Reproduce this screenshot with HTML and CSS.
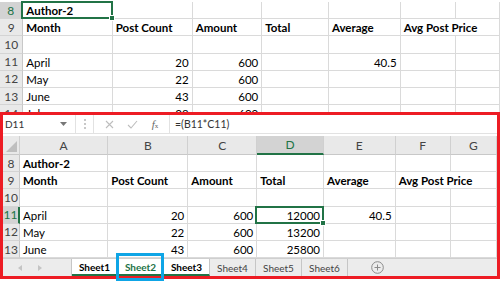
FILE: index.html
```html
<!DOCTYPE html>
<html lang="en">
<head>
    <meta charset="UTF-8">
    <meta name="viewport" content="width=device-width, initial-scale=1.0">
    <title>Author-2 - Excel</title>
    <link rel="stylesheet" href="styles.css">
</head>
<body>
    <!-- sheet before the formula was entered -->
    <section class="top-sheet">
        <div class="row">
            <div class="rh active">8</div>
            <div class="cell b sel">Author-2</div>
            <div class="cell"></div><div class="cell"></div><div class="cell"></div>
            <div class="cell"></div><div class="cell"></div><div class="cell"></div>
        </div>
        <div class="row">
            <div class="rh">9</div>
            <div class="cell b">Month</div>
            <div class="cell b">Post Count</div>
            <div class="cell b">Amount</div>
            <div class="cell b">Total</div>
            <div class="cell b">Average</div>
            <div class="cell b spill">Avg Post Price</div>
            <div class="cell"></div>
        </div>
        <div class="row">
            <div class="rh">10</div>
            <div class="cell"></div><div class="cell"></div><div class="cell"></div><div class="cell"></div>
            <div class="cell"></div><div class="cell"></div><div class="cell"></div>
        </div>
        <div class="row">
            <div class="rh">11</div>
            <div class="cell">April</div>
            <div class="cell num">20</div>
            <div class="cell num">600</div>
            <div class="cell"></div>
            <div class="cell num">40.5</div>
            <div class="cell"></div><div class="cell"></div>
        </div>
        <div class="row">
            <div class="rh">12</div>
            <div class="cell">May</div>
            <div class="cell num">22</div>
            <div class="cell num">600</div>
            <div class="cell"></div><div class="cell"></div><div class="cell"></div><div class="cell"></div>
        </div>
        <div class="row">
            <div class="rh">13</div>
            <div class="cell">June</div>
            <div class="cell num">43</div>
            <div class="cell num">600</div>
            <div class="cell"></div><div class="cell"></div><div class="cell"></div><div class="cell"></div>
        </div>
        <div class="row">
            <div class="rh">14</div>
            <div class="cell">July</div>
            <div class="cell num">38</div>
            <div class="cell num">600</div>
            <div class="cell"></div><div class="cell"></div><div class="cell"></div><div class="cell"></div>
        </div>
    </section>

    <!-- highlighted window with formula -->
    <section class="window">
        <div class="formula-bar">
            <div class="name-box">
                <span>D11</span>
                <svg class="caret" width="7" height="4" viewBox="0 0 7 4"><path d="M0 0h7L3.5 4z" fill="#777"/></svg>
            </div>
            <div class="grip">
                <svg width="2" height="10" viewBox="0 0 2 10"><path d="M0 0h2v2H0zM0 4h2v2H0zM0 8h2v2H0z" fill="#c8c8c8"/></svg>
            </div>
            <div class="fx-buttons">
                <svg width="9" height="9" viewBox="0 0 9 9"><path d="M1 1l7 7M8 1L1 8" stroke="#bdbdbd" stroke-width="1.1" fill="none"/></svg>
                <svg width="11" height="9" viewBox="0 0 11 9"><path d="M1 5l3 3 6-7" stroke="#bdbdbd" stroke-width="1.1" fill="none"/></svg>
                <span class="fx"><i>f</i><small>x</small></span>
            </div>
            <div class="formula">=(B11*C11)</div>
        </div>

        <div class="row col-head">
            <div class="corner">
                <svg width="11" height="11" viewBox="0 0 11 11"><path d="M11 0v11H0z" fill="#bfbfbf"/></svg>
            </div>
            <div class="ch">A</div>
            <div class="ch">B</div>
            <div class="ch">C</div>
            <div class="ch active">D</div>
            <div class="ch">E</div>
            <div class="ch">F</div>
            <div class="ch">G</div>
        </div>
        <div class="row">
            <div class="rh">8</div>
            <div class="cell b">Author-2</div>
            <div class="cell"></div><div class="cell"></div><div class="cell"></div>
            <div class="cell"></div><div class="cell"></div><div class="cell"></div>
        </div>
        <div class="row">
            <div class="rh">9</div>
            <div class="cell b">Month</div>
            <div class="cell b">Post Count</div>
            <div class="cell b">Amount</div>
            <div class="cell b">Total</div>
            <div class="cell b">Average</div>
            <div class="cell b spill">Avg Post Price</div>
            <div class="cell"></div>
        </div>
        <div class="row">
            <div class="rh">10</div>
            <div class="cell"></div><div class="cell"></div><div class="cell"></div><div class="cell"></div>
            <div class="cell"></div><div class="cell"></div><div class="cell"></div>
        </div>
        <div class="row">
            <div class="rh active">11</div>
            <div class="cell">April</div>
            <div class="cell num">20</div>
            <div class="cell num">600</div>
            <div class="cell num sel">12000</div>
            <div class="cell num">40.5</div>
            <div class="cell"></div><div class="cell"></div>
        </div>
        <div class="row">
            <div class="rh">12</div>
            <div class="cell">May</div>
            <div class="cell num">22</div>
            <div class="cell num">600</div>
            <div class="cell num">13200</div>
            <div class="cell"></div><div class="cell"></div><div class="cell"></div>
        </div>
        <div class="row">
            <div class="rh">13</div>
            <div class="cell">June</div>
            <div class="cell num">43</div>
            <div class="cell num">600</div>
            <div class="cell num">25800</div>
            <div class="cell"></div><div class="cell"></div><div class="cell"></div>
        </div>

        <div class="tabs">
            <div class="tab-nav">
                <svg width="4" height="6" viewBox="0 0 4 6"><path d="M4 0v6L0 3z" fill="#c4c4c4"/></svg>
                <svg width="4" height="6" viewBox="0 0 4 6"><path d="M0 0v6l4-3z" fill="#c4c4c4"/></svg>
            </div>
            <div class="tab on">Sheet1</div>
            <div class="tab on current">Sheet2</div>
            <div class="tab on">Sheet3</div>
            <div class="tab">Sheet4</div>
            <div class="tab">Sheet5</div>
            <div class="tab">Sheet6</div>
            <div class="add-sheet">
                <svg width="13" height="13" viewBox="0 0 13 13"><circle cx="6.5" cy="6.5" r="5.8" stroke="#8a8a8a" fill="none"/><path d="M6.5 3.5v6M3.5 6.5h6" stroke="#8a8a8a"/></svg>
            </div>
        </div>
    </section>
</body>
</html>
```

FILE: styles.css
```css
body {
    margin: 0;
    width: 500px;
    height: 281px;
    overflow: hidden;
    background: #fff;
    font-family: Lato, "Liberation Sans", sans-serif;
    font-size: 11.5px;
    color: #000;
}

.top-sheet {
    height: 112px;
    padding-top: 2px;
    box-sizing: border-box;
    overflow: hidden;
}

.row {
    display: grid;
    height: 17.2px;
}

.top-sheet .row {
    grid-template-columns: 23.3px 89.4px 80px 69.6px 66.7px 71.7px 55px 1fr;
}

.window .row {
    grid-template-columns: 17px 88.3px 80px 69px 66.7px 71.7px 55px 1fr;
}

.cell {
    position: relative;
    display: flex;
    align-items: center;
    padding: 1px 3px 0;
    border-right: 1px solid #dadada;
    border-bottom: 1px solid #dadada;
    white-space: nowrap;
    min-width: 0;
}

.num {
    justify-content: flex-end;
}

.b {
    font-weight: bold;
}

.spill {
    border-right: none;
    overflow: visible;
}

.sel::after {
    content: "";
    position: absolute;
    inset: -1px -1px -1px -2px;
    border: 2px solid #217346;
    z-index: 1;
}

.sel::before {
    content: "";
    position: absolute;
    right: -3px;
    bottom: -3px;
    width: 4px;
    height: 4px;
    background: #217346;
    border: 1px solid #fff;
    z-index: 2;
}

.rh {
    display: flex;
    align-items: center;
    justify-content: center;
    background: #e9e9e9;
    color: #444;
    font-size: 12px;
    border-right: 1px solid #c8c8c8;
    border-bottom: 1px solid #d4d4d4;
}

.rh.active {
    background: #d3d3d3;
    color: #217346;
    border-right: 2px solid #217346;
}

.window {
    position: relative;
    height: 167px;
    border: 3px solid #ed1c24;
    box-sizing: border-box;
}

.formula-bar {
    display: flex;
    height: 19px;
    margin-bottom: 2px;
    background: #fff;
    border-bottom: 1px solid #e2e2e2;
    box-sizing: border-box;
    font-size: 10px;
    color: #333;
}

.name-box {
    display: flex;
    align-items: center;
    justify-content: space-between;
    width: 73px;
    padding: 0 8px 0 2px;
    box-sizing: border-box;
    border-right: 1px solid #e2e2e2;
}

.grip {
    display: flex;
    align-items: center;
    justify-content: center;
    width: 17px;
}

.fx-buttons {
    display: flex;
    align-items: center;
    justify-content: space-around;
    width: 77px;
    padding: 0 4px;
    box-sizing: border-box;
    border-left: 1px solid #e2e2e2;
    border-right: 1px solid #e2e2e2;
}

.fx {
    font-family: "Liberation Serif", serif;
    color: #666;
    font-size: 11px;
}

.fx small {
    font-size: 7px;
}

.formula {
    display: flex;
    align-items: center;
    padding-left: 5px;
    font-size: 10.5px;
}

.col-head {
    height: 19px;
}

.corner,
.ch {
    display: flex;
    align-items: center;
    justify-content: center;
    background: #e9e9e9;
    color: #444;
    font-size: 12px;
    border-right: 1px solid #d0d0d0;
    border-bottom: 1px solid #c8c8c8;
}

.corner {
    align-items: flex-end;
    justify-content: flex-end;
    padding: 0 2px 2px 0;
}

.ch.active {
    background: #d3d3d3;
    color: #217346;
    border-bottom: 2px solid #217346;
}

.tabs {
    display: flex;
    height: 18px;
    background: #ececec;
    border-top: 1px solid #cfcfcf;
    box-sizing: border-box;
    font-size: 10px;
    color: #444;
}

.tab-nav {
    display: flex;
    align-items: center;
    gap: 16px;
    width: 69px;
    padding-left: 15px;
    box-sizing: border-box;
    border-right: 1px solid #c6c6c6;
}

.tab {
    position: relative;
    display: flex;
    align-items: center;
    justify-content: center;
    width: 46px;
    border-right: 1px solid #c6c6c6;
    box-sizing: border-box;
}

.tab.on {
    background: #fff;
    color: #000;
    font-weight: bold;
    border-bottom: 2px solid #217346;
}

.tab.current {
    color: #217346;
}

.tab.current::after {
    content: "";
    position: absolute;
    left: -2px;
    right: -1px;
    top: -6px;
    bottom: -7px;
    border: 3px solid #0ea5e6;
}

.add-sheet {
    display: flex;
    align-items: center;
    padding-left: 23px;
}
```
